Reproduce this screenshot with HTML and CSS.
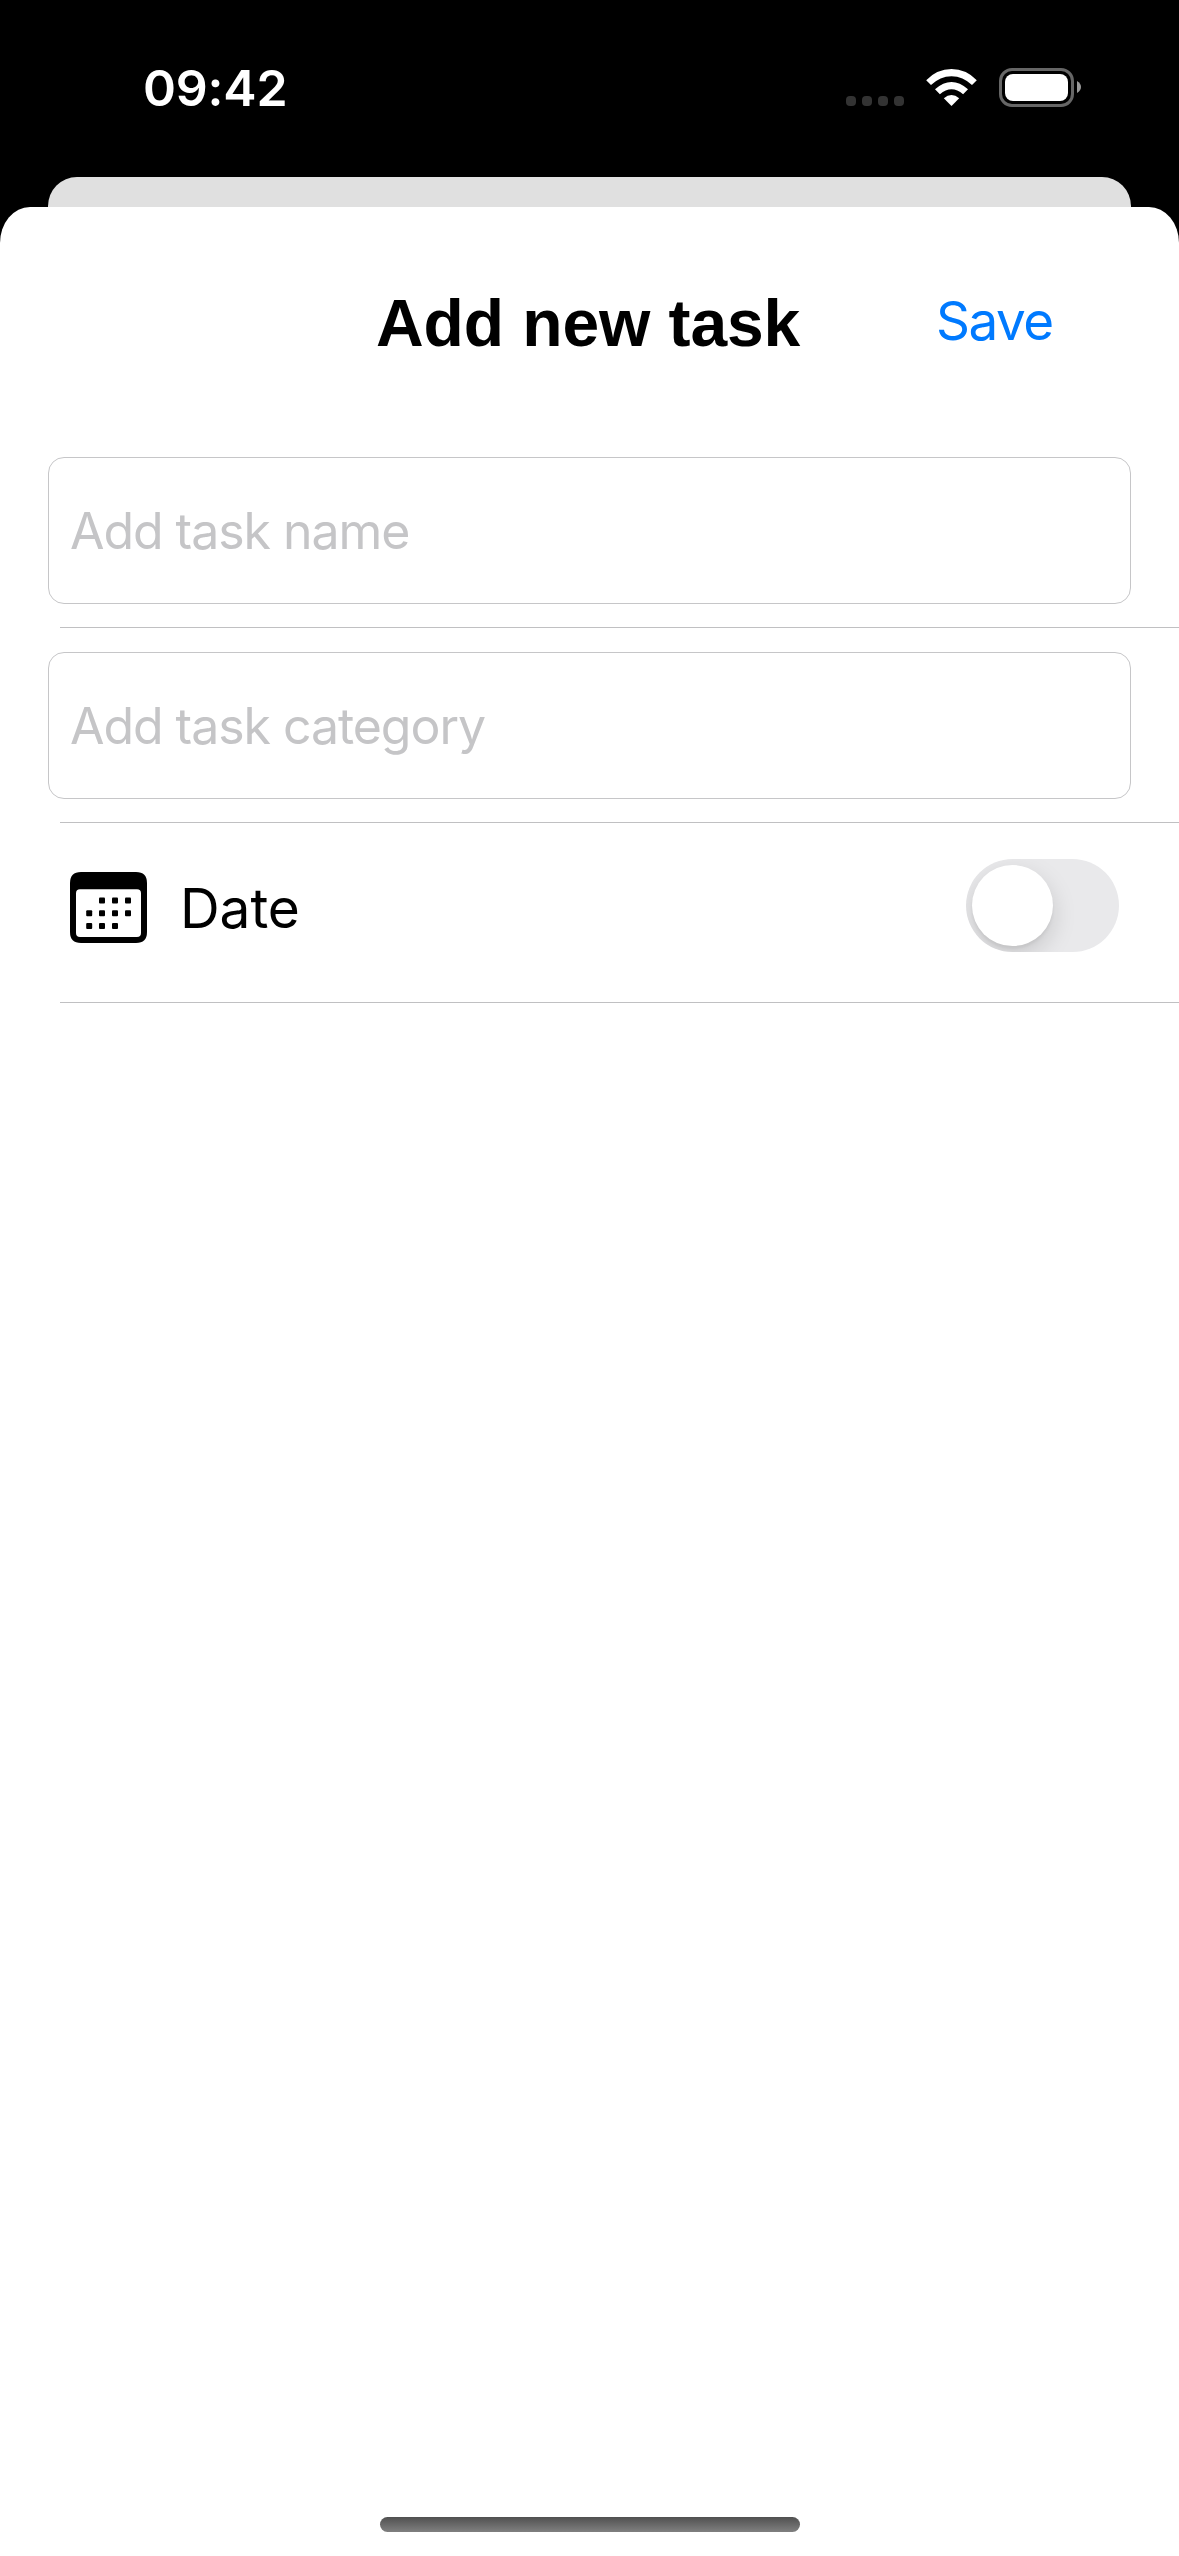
FILE: index.html
```html
<!DOCTYPE html>
<html lang="en">
<head>
<meta charset="utf-8">
<title>Add new task</title>
<link rel="stylesheet" href="styles.css">
</head>
<body>
<div class="screen">
  <header class="status-bar">
    <span class="clock">09:42</span>
    <svg class="status-icons" width="234" height="40" viewBox="0 0 234 40" aria-hidden="true">
      <g fill="#333">
        <rect x="0" y="28" width="10" height="10" rx="4"/>
        <rect x="16" y="28" width="10" height="10" rx="4"/>
        <rect x="32" y="28" width="10" height="10" rx="4"/>
        <rect x="48" y="28" width="10" height="10" rx="4"/>
      </g>
      <g fill="#fff">
        <path d="M105.500 38L97.800 30.200Q105.500 23.600 113.200 30.200Z"/>
        <path d="M89.000 21.200Q105.500 6.600 122.000 21.200L117.100 26.200Q105.500 16.200 93.900 26.200Z"/>
        <path d="M80.200 12.200Q91.000 1 105.500 1T130.800 12.200L126.000 17.100Q117.000 8.200 105.500 8.200T85.000 17.100Z"/>
      </g>
      <rect x="154.500" y="1.500" width="72" height="36" rx="11.500" fill="none" stroke="#666" stroke-width="3"/>
      <rect x="159" y="6" width="63" height="27" rx="8" fill="#fff"/>
      <path d="M231 13Q235 15.500 235 19T231 25Z" fill="#999"/>
    </svg>
  </header>
  <div class="back-sheet"></div>
  <main class="sheet">
    <div class="title-bar">
      <h1 class="title">Add new task</h1>
      <a class="save">Save</a>
    </div>
    <div class="row"><div class="field"><span class="hint">Add task name</span></div></div>
    <div class="row"><div class="field"><span class="hint">Add task category</span></div></div>
    <div class="row date-row">
      <svg class="calendar" width="77" height="71" viewBox="0 0 77 71" aria-hidden="true">
        <path fill-rule="evenodd" d="M11 0H66Q77 0 77 11V60Q77 71 66 71H11Q0 71 0 60V11Q0 0 11 0ZM10 17.300Q6 17.300 6 21.300V61Q6 65 10 65H67Q71 65 71 61V21.300Q71 17.300 67 17.300Z"/>
        <g>
          <rect x="29" y="25.500" width="6" height="6" rx="1"/><rect x="42" y="25.500" width="6" height="6" rx="1"/><rect x="55" y="25.500" width="6" height="6" rx="1"/>
          <rect x="16.200" y="38.200" width="6" height="6" rx="1"/><rect x="29" y="38.200" width="6" height="6" rx="1"/><rect x="42" y="38.200" width="6" height="6" rx="1"/><rect x="55" y="38.200" width="6" height="6" rx="1"/>
          <rect x="16.200" y="51" width="6" height="6" rx="1"/><rect x="29" y="51" width="6" height="6" rx="1"/><rect x="42" y="51" width="6" height="6" rx="1"/>
        </g>
      </svg>
      <span class="date-label">Date</span>
      <div class="switch"><div class="knob"></div></div>
    </div>
    <div class="home-indicator"></div>
  </main>
</div>
</body>
</html>
```

FILE: styles.css
```css
* { box-sizing: border-box; }

body {
  margin: 0;
  background: #000;
  font-family: Inter, "Liberation Sans", sans-serif;
}

.screen {
  display: flex;
  flex-direction: column;
  width: 1179px;
  height: 2556px;
  overflow: hidden;
  background: #000;
}

.status-bar {
  display: flex;
  justify-content: space-between;
  align-items: flex-start;
  height: 177px;
  padding: 68px 99px 0 143px;
}

.clock {
  color: #fff;
  font-size: 50px;
  font-weight: 580;
  line-height: 40px;
  letter-spacing: -0.2px;
  white-space: nowrap;
}

.status-icons { overflow: visible; }

.back-sheet {
  height: 30px;
  margin: 0 48px;
  border-radius: 29px 29px 0 0;
  background: #e0e0e0;
}

.sheet {
  display: flex;
  flex: 1;
  flex-direction: column;
  border-radius: 30px 30px 0 0 / 36px 36px 0 0;
  background: #fff;
}

.title-bar {
  display: grid;
  grid-template-columns: 376px 560px 1fr;
  height: 226px;
  padding-top: 78px;
}

.title {
  grid-column: 2;
  margin: 0;
  font: bold 66px/76px "Liberation Sans", Arial, sans-serif;
  letter-spacing: -0.1px;
  white-space: nowrap;
}

.save {
  color: #007aff;
  font-size: 53px;
  line-height: 73px;
  letter-spacing: -1.5px;
}

.row {
  height: 195px;
  margin-left: 60px;
  padding: 24px 48px 0 0;
  border-bottom: 1px solid #c0c0c2;
}

.field {
  display: flex;
  align-items: center;
  height: 147px;
  margin-left: -12px;
  padding-left: 21px;
  border: 1px solid #c6c6c8;
  border-radius: 16px;
}

.hint {
  color: #c5c5c7;
  font-size: 50px;
  line-height: 60px;
  letter-spacing: -1.05px;
  white-space: nowrap;
}

.date-row {
  display: flex;
  align-items: flex-start;
  height: 180px;
  padding: 36px 60px 0 10px;
}

.calendar { margin-top: 13px; }

.date-label {
  margin-left: 33px;
  padding-top: 16px;
  font-size: 55px;
  line-height: 66px;
  letter-spacing: -0.1px;
}

.switch {
  width: 153px;
  height: 93px;
  margin-left: auto;
  padding: 6px;
  overflow: hidden;
  border-radius: 47px;
  background: #e9e9eb;
}

.knob {
  width: 81px;
  height: 81px;
  border-radius: 50%;
  background: #fff;
  box-shadow: 0 9px 24px rgba(0, 0, 0, 0.15), 0 3px 3px rgba(0, 0, 0, 0.05);
}

.home-indicator {
  width: 420px;
  height: 15px;
  margin: auto auto 24px 380px;
  border-radius: 8px;
  background: linear-gradient(#505050, #808080);
}
```
